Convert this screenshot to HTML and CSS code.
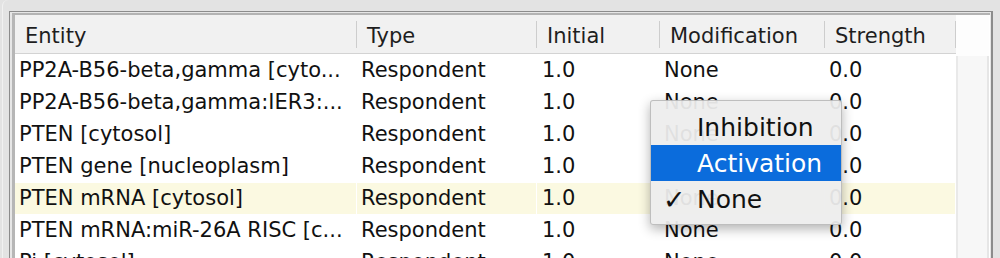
FILE: index.html
```html
<!DOCTYPE html>
<html lang="en">
<head>
    <meta charset="UTF-8">
    <title>Entity modifications</title>
    <link rel="stylesheet" href="styles.css">
</head>
<body>
    <div class="window">
        <!-- Scroll pane with the entity table -->
        <div class="pane">
            <div class="viewport">
                <div class="table">
                    <div class="row head">
                        <div class="th">Entity</div>
                        <div class="th">Type</div>
                        <div class="th">Initial</div>
                        <div class="th">Modification</div>
                        <div class="th">Strength</div>
                    </div>
                    <div class="row">
                        <div class="td">PP2A-B56-beta,gamma [cyto...</div>
                        <div class="td">Respondent</div>
                        <div class="td num">1.0</div>
                        <div class="td">None</div>
                        <div class="td">0.0</div>
                    </div>
                    <div class="row">
                        <div class="td">PP2A-B56-beta,gamma:IER3:...</div>
                        <div class="td">Respondent</div>
                        <div class="td num">1.0</div>
                        <div class="td">None</div>
                        <div class="td">0.0</div>
                    </div>
                    <div class="row">
                        <div class="td">PTEN [cytosol]</div>
                        <div class="td">Respondent</div>
                        <div class="td num">1.0</div>
                        <div class="td">None</div>
                        <div class="td">0.0</div>
                    </div>
                    <div class="row">
                        <div class="td">PTEN gene [nucleoplasm]</div>
                        <div class="td">Respondent</div>
                        <div class="td num">1.0</div>
                        <div class="td">None</div>
                        <div class="td">0.0</div>
                    </div>
                    <div class="row selected">
                        <div class="td">PTEN mRNA [cytosol]</div>
                        <div class="td">Respondent</div>
                        <div class="td num">1.0</div>
                        <div class="td">None</div>
                        <div class="td">0.0</div>
                    </div>
                    <div class="row">
                        <div class="td">PTEN mRNA:miR-26A RISC [c...</div>
                        <div class="td">Respondent</div>
                        <div class="td num">1.0</div>
                        <div class="td">None</div>
                        <div class="td">0.0</div>
                    </div>
                    <div class="row">
                        <div class="td">Pi [cytosol]</div>
                        <div class="td">Respondent</div>
                        <div class="td num">1.0</div>
                        <div class="td">None</div>
                        <div class="td">0.0</div>
                    </div>
                </div>
                <div class="vscroll">
                    <div class="corner"></div>
                    <div class="track"></div>
                </div>
            </div>
        </div>

        <!-- Modification combo popup -->
        <div class="popup">
            <div class="item"><span class="check"></span>Inhibition</div>
            <div class="item active"><span class="check"></span>Activation</div>
            <div class="item"><span class="check">✓</span>None</div>
        </div>
    </div>
</body>
</html>
```

FILE: styles.css
```css
body {
    margin: 0;
    padding: 0;
    background-color: #e3e3e3;
    font-family: 'DejaVu Sans', 'Liberation Sans', sans-serif;
    color: #111;
    overflow: hidden;
}

.window {
    position: relative;
    height: 258px;
    margin-left: 2px;
    padding-top: 11px;
    border-left: 1px solid #f1f1f1;
    border-top-left-radius: 6px;
    box-sizing: border-box;
}

.pane {
    margin-left: 6px;
    width: 978px;
    border: 1px solid #8c8c8c;
    border-right-width: 2px;
    border-bottom: none;
    padding: 1px 1px 0 2px;
    background-color: #e6e6e6;
}

.viewport {
    display: flex;
    border-top: 2px solid #b3b3b3;
    border-left: 3px solid #b6b6b6;
    background-color: #ffffff;
    height: 260px;
}

.table {
    width: 941px;
}

.row {
    display: grid;
    grid-template-columns: 342px 180px 123px 165px 131px;
    height: 32px;
    font-size: 21px;
    line-height: 32px;
}

.head {
    height: 38px;
    line-height: 38px;
    background-color: #f1f1f1;
    border-bottom: 1px solid #d3d3d3;
    color: #1e1e1e;
}

.th {
    position: relative;
    padding: 5px 0 0 10px;
    box-sizing: border-box;
    height: 38px;
    line-height: 33px;
}

.th::after {
    content: "";
    position: absolute;
    right: 0;
    top: 6px;
    bottom: 5px;
    width: 1px;
    background-color: #cdcdcd;
}

.td {
    padding-left: 4px;
    white-space: nowrap;
    overflow: hidden;
}

.td.num {
    padding-left: 5px;
}

.selected .td {
    background-color: #fbf9e1;
    box-shadow: inset -1px 0 #ffffff, inset 0 1px #ffffff;
}

.vscroll {
    width: 33px;
    display: flex;
    flex-direction: column;
}

.corner {
    height: 41px;
    background-color: #fdfdfd;
}

.track {
    flex: 1;
    background-color: #f7f7f7;
    border-left: 2px solid #e9e9e9;
    border-right: 2px solid #e6e6e6;
}

/* popup menu floats over the table */
.popup {
    position: absolute;
    left: 647px;
    top: 100px;
    width: 190px;
    padding: 8px 0 7px;
    background-color: rgba(237, 237, 237, 0.94);
    border: 1px solid rgba(0, 0, 0, 0.2);
    border-radius: 3px;
    box-shadow: 0 4px 12px rgba(0, 0, 0, 0.3);
    font-size: 25px;
}

.item {
    display: flex;
    height: 36px;
    line-height: 37px;
    color: #111;
}

.item.active {
    background-color: #0b6cdc;
    color: #ffffff;
}

.check {
    width: 46px;
    padding-left: 12px;
    box-sizing: border-box;
    font-size: 27px;
    font-weight: bold;
}
```
